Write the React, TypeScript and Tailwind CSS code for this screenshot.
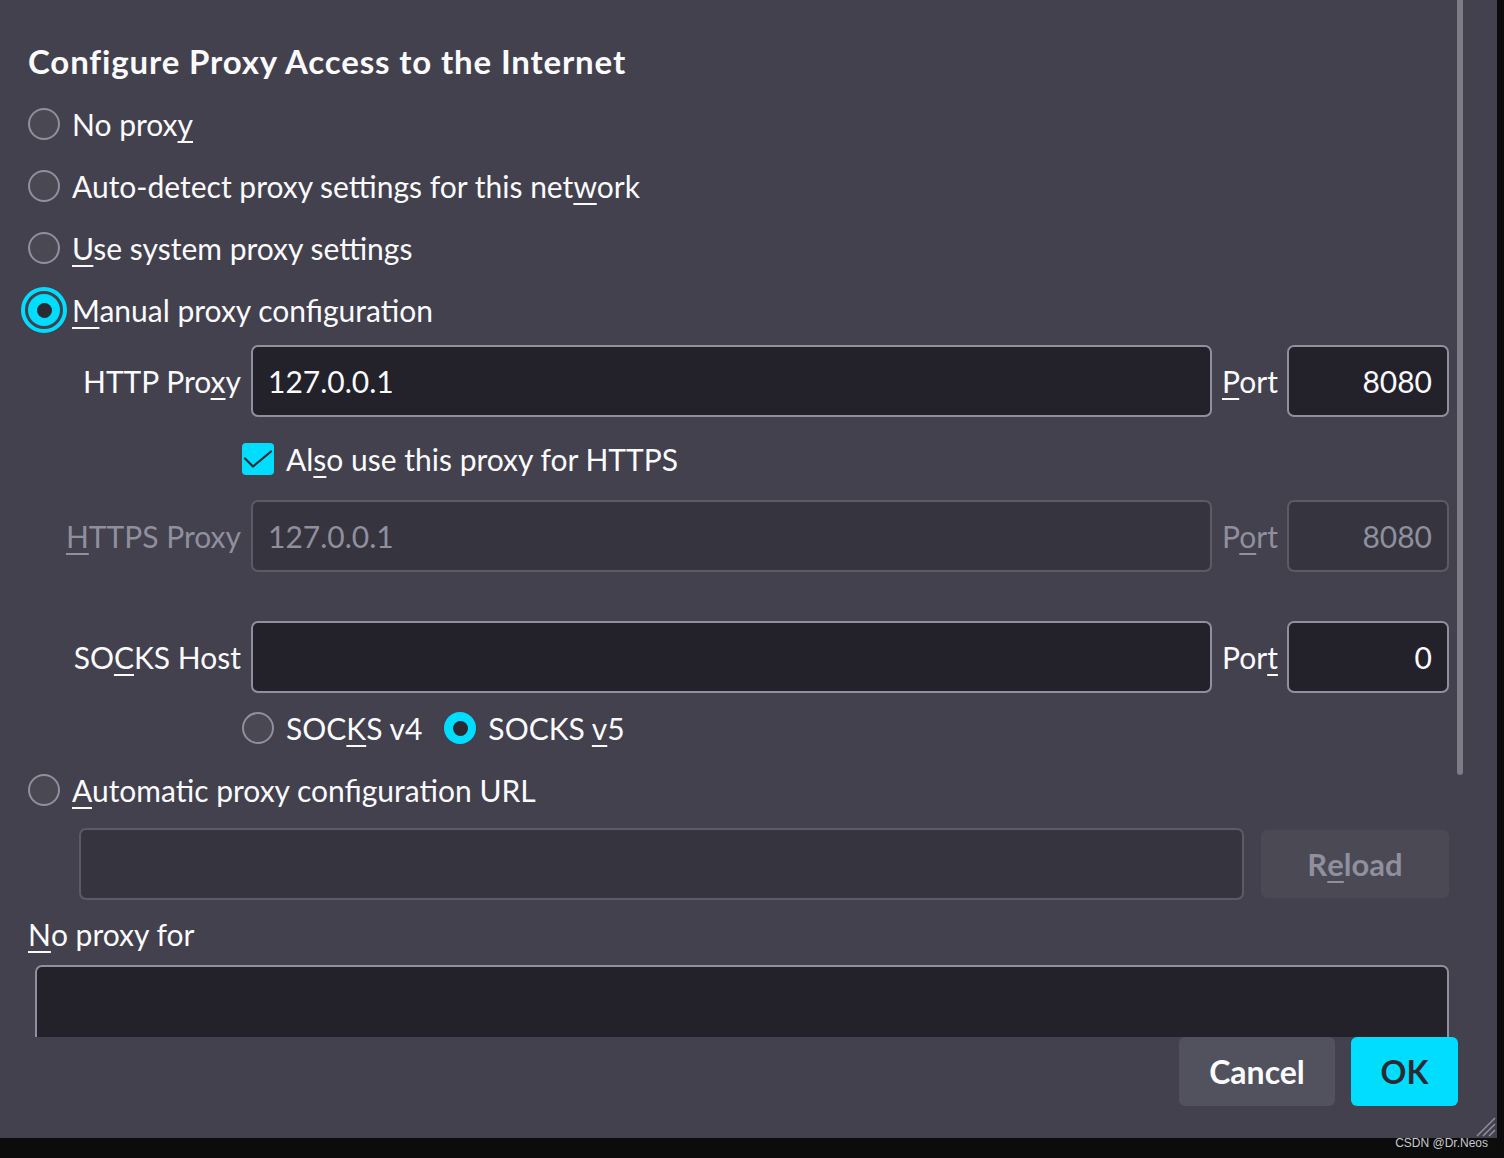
import React from "react";

function Radio({ checked = false, focus = false }: { checked?: boolean; focus?: boolean }) {
  return (
    <span
      className={
        "flex h-[32px] w-[32px] shrink-0 items-center justify-center rounded-full " +
        (checked ? "bg-[#00ddff] " : "border-2 border-[#8f8f9d] bg-[#4a4953] ") +
        (focus ? "outline-4 outline-solid outline-[#00ddff] outline-offset-3" : "")
      }
    >
      {checked && <span className="h-[15px] w-[15px] rounded-full bg-[#2b2a33]" />}
    </span>
  );
}

function Checkbox() {
  return (
    <span className="flex h-[32px] w-[32px] shrink-0 items-center justify-center rounded-[4px] bg-[#00ddff]">
      <svg width="32" height="32" viewBox="0 0 32 32" fill="none">
        <path d="M3 15.5 L11 23.5 L29 8.5" stroke="#2b2a33" strokeWidth="2.2" strokeLinecap="round" strokeLinejoin="round" />
      </svg>
    </span>
  );
}

function Input({ value = "", disabled = false, right = false, className = "" }: { value?: string; disabled?: boolean; right?: boolean; className?: string }) {
  return (
    <div
      className={
        "flex h-[72px] items-center rounded-[7px] border-2 px-[15px] " +
        (disabled ? "border-[#5b5a65] bg-[#36353f] text-[#8f8f9d] " : "border-[#8f8f9d] bg-[#23222b] text-[#fbfbfe] ") +
        (right ? "justify-end " : "") +
        className
      }
    >
      {value}
    </div>
  );
}

function U({ children }: { children: React.ReactNode }) {
  return <span className="underline decoration-[2px] underline-offset-[5px]">{children}</span>;
}

function RadioRow({ checked, focus, children }: { checked?: boolean; focus?: boolean; children: React.ReactNode }) {
  return (
    <div className="flex h-[62px] items-center gap-[12px]">
      <Radio checked={checked} focus={focus} />
      <span>{children}</span>
    </div>
  );
}

export default function App() {
  return (
    <div className="relative h-[1158px] w-[1504px] overflow-hidden bg-[#0c0c0d] font-['Lato','Noto_Sans',sans-serif] text-[30px] leading-none text-[#fbfbfe]">
      <div className="relative flex h-[1138px] w-[1497px] flex-col bg-[#42414d]">
        {/* scroll content */}
        <div className="relative h-[1037px] overflow-hidden pl-[28px] pr-[48px]">
          <div className="absolute right-[34px] top-0 h-[775px] w-[6px] rounded-b-[3px] bg-[#7c7b86]" />
          <div className="mt-[41px] flex h-[40px] items-center text-[33px] font-bold tracking-[0.85px]">Configure Proxy Access to the Internet</div>
          <div className="mt-[12px]">
            <RadioRow>No prox<U>y</U></RadioRow>
            <RadioRow>Auto-detect proxy settings for this net<U>w</U>ork</RadioRow>
            <RadioRow><U>U</U>se system proxy settings</RadioRow>
            <RadioRow checked focus><U>M</U>anual proxy configuration</RadioRow>
          </div>

          {/* HTTP */}
          <div className="mt-[4px] flex items-center gap-[10px]">
            <div className="w-[213px] shrink-0 text-right">HTTP Pro<U>x</U>y</div>
            <Input value="127.0.0.1" className="flex-1" />
            <div className="w-[55px] shrink-0"><U>P</U>ort</div>
            <Input value="8080" right className="w-[162px] shrink-0" />
          </div>
          <div className="flex h-[83px] items-center gap-[12px] pl-[214px]">
            <Checkbox />
            <span>Al<U>s</U>o use this proxy for HTTPS</span>
          </div>
          {/* HTTPS */}
          <div className="flex items-center gap-[10px]">
            <div className="w-[213px] shrink-0 text-right text-[#8f8f9d]"><U>H</U>TTPS Proxy</div>
            <Input value="127.0.0.1" disabled className="flex-1" />
            <div className="w-[55px] shrink-0 text-[#8f8f9d]">P<U>o</U>rt</div>
            <Input value="8080" right disabled className="w-[162px] shrink-0" />
          </div>
          {/* SOCKS */}
          <div className="mt-[49px] flex items-center gap-[10px]">
            <div className="w-[213px] shrink-0 text-right">SO<U>C</U>KS Host</div>
            <Input className="flex-1" />
            <div className="w-[55px] shrink-0">Por<U>t</U></div>
            <Input value="0" right className="w-[162px] shrink-0" />
          </div>
          <div className="flex h-[70px] items-center pl-[214px]">
            <Radio />
            <span className="ml-[12px]">SOC<U>K</U>S v4</span>
            <span className="ml-[22px]"><Radio checked /></span>
            <span className="ml-[12px]">SOCKS <U>v</U>5</span>
          </div>
          <div className="flex h-[54px] items-center gap-[12px]">
            <Radio />
            <span><U>A</U>utomatic proxy configuration URL</span>
          </div>
          <div className="mt-[11px] flex items-center gap-[17px] pl-[51px]">
            <Input disabled className="flex-1" />
            <div className="flex h-[68px] w-[188px] shrink-0 items-center justify-center rounded-[6px] bg-[#4a4954] text-[31px] font-bold text-[#8f8f9d]">
              R<U>e</U>load
            </div>
          </div>
          <div className="mt-[6px] flex h-[56px] items-center"><U>N</U>o proxy for</div>
          <div className="ml-[7px] mt-[3px] h-[140px] rounded-[7px] border-2 border-[#8f8f9d] bg-[#23222b]" />
        </div>

        {/* footer */}
        <div className="flex justify-end gap-[16px] pr-[39px] text-[32px]">
          <div className="flex h-[69px] w-[156px] items-center justify-center rounded-[6px] bg-[#52515e] font-bold">Cancel</div>
          <div className="flex h-[69px] w-[107px] items-center justify-center rounded-[6px] bg-[#00ddff] font-bold text-[#2b2a33]">OK</div>
        </div>

        <svg className="absolute bottom-[1px] right-[1px]" width="22" height="22" viewBox="0 0 22 22">
          <path d="M21 3 L3 21 M21 9 L9 21 M21 15 L15 21" stroke="#8f8f9d" strokeWidth="1.5" />
        </svg>
      </div>
      <div className="absolute bottom-[9px] right-[16px] font-['Liberation_Sans',sans-serif] text-[12px] text-[#c9c9cc]">CSDN @Dr.Neos</div>
    </div>
  );
}
